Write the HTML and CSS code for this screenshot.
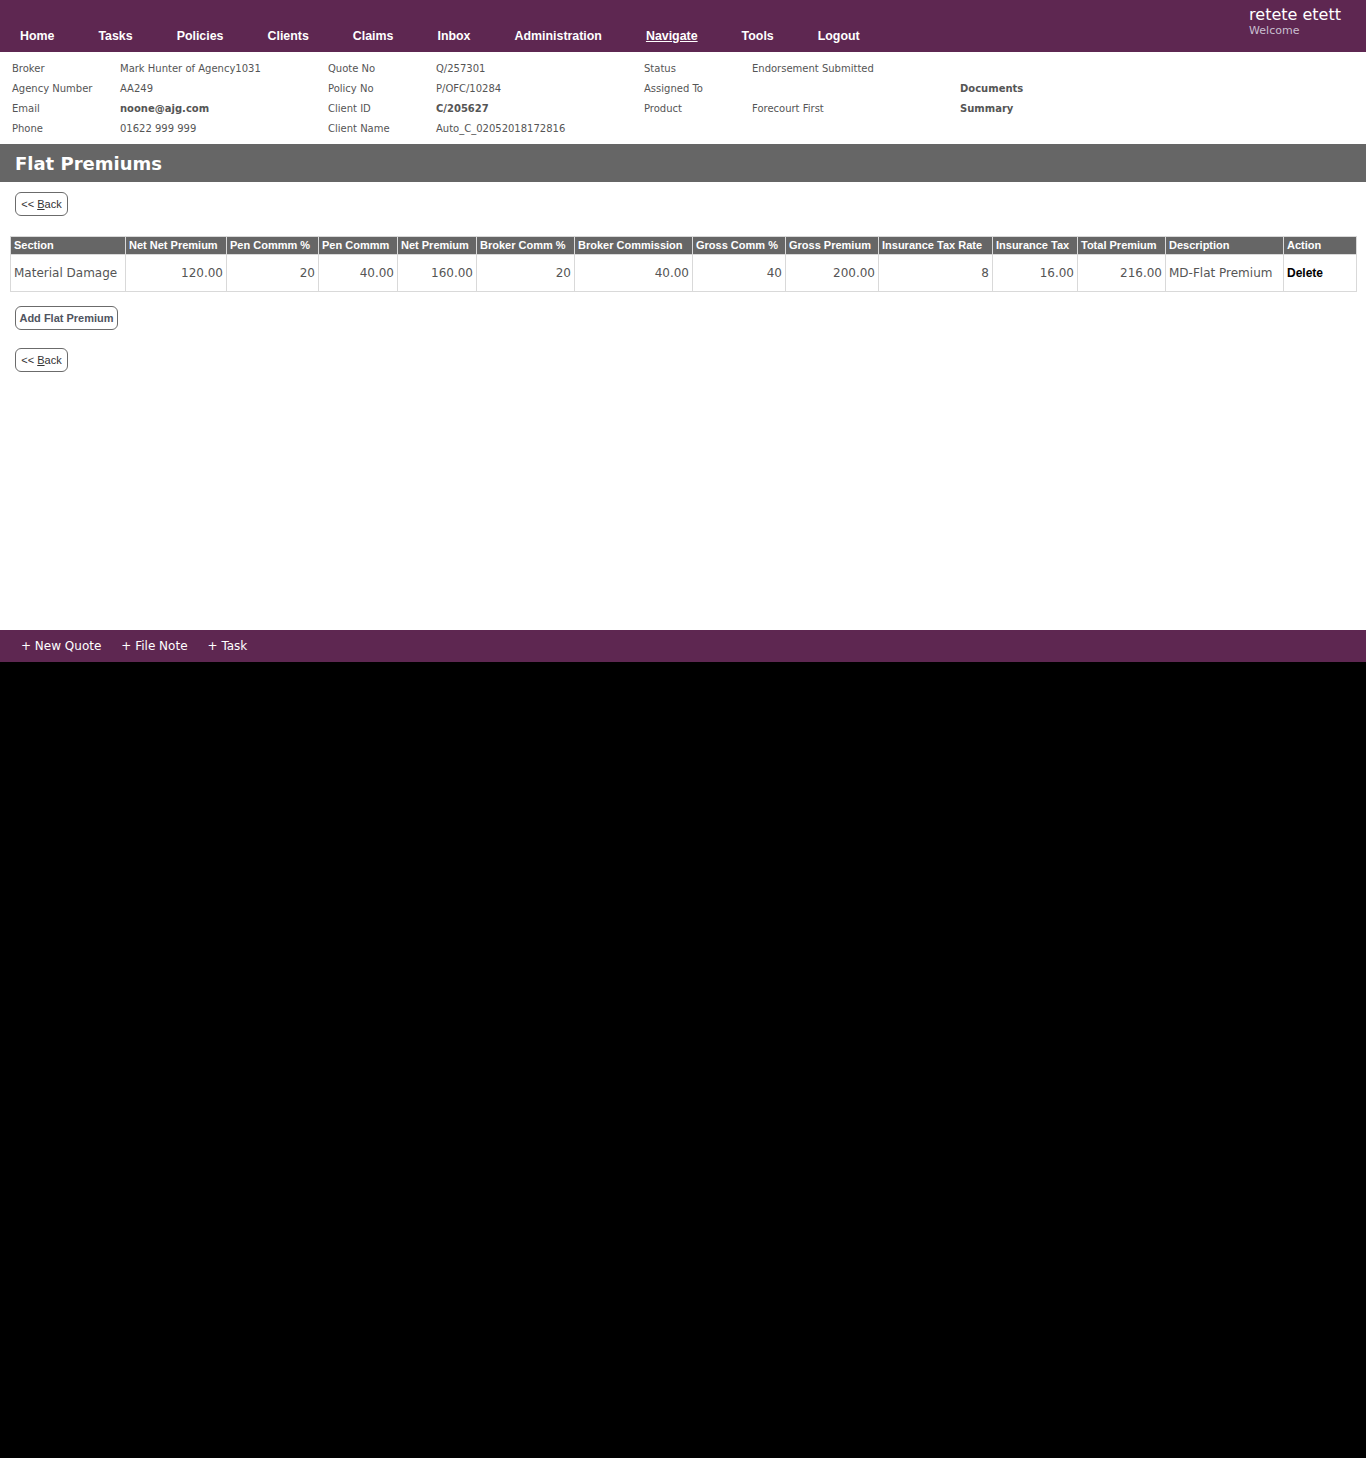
FILE: index.html
```html
<!DOCTYPE html>
<html lang="en">
<head>
<meta charset="utf-8">
<title>Flat Premiums</title>
<link rel="stylesheet" href="styles.css">
</head>
<body>
<div class="page">
  <header class="topbar">
    <nav class="nav">
      <a href="#">Home</a>
      <a href="#">Tasks</a>
      <a href="#">Policies</a>
      <a href="#">Clients</a>
      <a href="#">Claims</a>
      <a href="#">Inbox</a>
      <a href="#">Administration</a>
      <a href="#" class="active">Navigate</a>
      <a href="#">Tools</a>
      <a href="#">Logout</a>
    </nav>
    <div class="user">
      <div class="user-name">retete etett</div>
      <div class="user-welcome">Welcome</div>
    </div>
  </header>

  <section class="info">
    <div class="lbl">Broker</div><div class="val">Mark Hunter of Agency1031</div>
    <div class="lbl">Quote No</div><div class="val">Q/257301</div>
    <div class="lbl">Status</div><div class="val">Endorsement Submitted</div>
    <div class="link"></div>

    <div class="lbl">Agency Number</div><div class="val">AA249</div>
    <div class="lbl">Policy No</div><div class="val">P/OFC/10284</div>
    <div class="lbl">Assigned To</div><div class="val"></div>
    <div class="link">Documents</div>

    <div class="lbl">Email</div><div class="val strong">noone@ajg.com</div>
    <div class="lbl">Client ID</div><div class="val strong">C/205627</div>
    <div class="lbl">Product</div><div class="val">Forecourt First</div>
    <div class="link">Summary</div>

    <div class="lbl">Phone</div><div class="val">01622 999 999</div>
    <div class="lbl">Client Name</div><div class="val">Auto_C_02052018172816</div>
    <div class="lbl"></div><div class="val"></div>
    <div class="link"></div>
  </section>

  <h1 class="title-bar">Flat Premiums</h1>

  <main class="content">
    <button class="btn btn-back">&lt;&lt; <u>B</u>ack</button>

    <table class="grid">
      <colgroup>
        <col class="w1"><col class="w2"><col class="w3"><col class="w4"><col class="w5"><col class="w6"><col class="w7">
        <col class="w8"><col class="w9"><col class="w10"><col class="w11"><col class="w12"><col class="w13"><col class="w14">
      </colgroup>
      <thead>
        <tr>
          <th>Section</th>
          <th>Net Net Premium</th>
          <th>Pen Commm %</th>
          <th>Pen Commm</th>
          <th>Net Premium</th>
          <th>Broker Comm %</th>
          <th>Broker Commission</th>
          <th>Gross Comm %</th>
          <th>Gross Premium</th>
          <th>Insurance Tax Rate</th>
          <th>Insurance Tax</th>
          <th>Total Premium</th>
          <th>Description</th>
          <th>Action</th>
        </tr>
      </thead>
      <tbody>
        <tr>
          <td>Material Damage</td>
          <td class="num">120.00</td>
          <td class="num">20</td>
          <td class="num">40.00</td>
          <td class="num">160.00</td>
          <td class="num">20</td>
          <td class="num">40.00</td>
          <td class="num">40</td>
          <td class="num">200.00</td>
          <td class="num">8</td>
          <td class="num">16.00</td>
          <td class="num">216.00</td>
          <td>MD-Flat Premium</td>
          <td class="action">Delete</td>
        </tr>
      </tbody>
    </table>

    <button class="btn btn-add">Add Flat Premium</button>
    <button class="btn btn-back btn-back2">&lt;&lt; <u>B</u>ack</button>
  </main>

  <footer class="bottombar">
    <a href="#">+ New Quote</a>
    <a href="#">+ File Note</a>
    <a href="#">+ Task</a>
  </footer>
</div>
</body>
</html>
```

FILE: styles.css
```css
html {
  background: #000;
}
body {
  margin: 0;
  font-family: "DejaVu Sans", Verdana, sans-serif;
  color: #555;
}
.page {
  display: flex;
  flex-direction: column;
  min-height: 662px;
  background: #fff;
}

/* top bar */
.topbar {
  height: 52px;
  background: #5e2751;
  display: flex;
  justify-content: space-between;
}
.nav {
  display: flex;
  gap: 44px;
  padding: 28px 0 0 20px;
}
.nav a {
  color: #fff;
  text-decoration: none;
  font-family: "Liberation Sans", Arial, sans-serif;
  font-weight: bold;
  font-size: 12.4px;
  line-height: 16px;
}
.nav a.active {
  text-decoration: underline;
}
.user {
  padding: 6px 25px 0 0;
  white-space: nowrap;
}
.user-name {
  color: #fff;
  font-size: 16px;
  line-height: 18px;
}
.user-welcome {
  color: #c9bfd0;
  font-size: 11px;
  line-height: 13px;
}

/* info grid */
.info {
  display: grid;
  grid-template-columns: 108px 208px 108px 208px 108px 208px 200px;
  grid-auto-rows: 20px;
  padding: 7px 0 5px 12px;
  font-size: 10px;
  line-height: 20px;
  color: #555;
}
.info .strong {
  font-weight: bold;
}
.info .link {
  font-weight: bold;
}

/* title */
.title-bar {
  margin: 0;
  height: 38px;
  background: #666;
  color: #fff;
  font-size: 18px;
  line-height: 40px;
  padding-left: 15px;
  font-weight: bold;
}

/* content */
.content {
  flex: 1;
  display: flex;
  flex-direction: column;
  align-items: flex-start;
  padding: 10px 10px 0 10px;
}
.btn {
  font-family: "Liberation Sans", Arial, sans-serif;
  font-size: 11px;
  font-weight: bold;
  color: #4f5460;
  background: #fff;
  border: 1px solid #6b6b6b;
  border-radius: 6px;
  height: 24px;
  padding: 0 5px;
  margin-left: 5px;
  line-height: 22px;
}
.btn-back {
  width: 53px;
  font-weight: normal;
  color: #333;
  padding: 0;
}
.btn-add {
  margin-top: 14px;
  width: 103px;
  padding: 0;
}
.btn-back2 {
  margin-top: 18px;
}

.grid {
  margin-top: 20px;
  width: 1346px;
  table-layout: fixed;
  border-collapse: collapse;
}
.grid th {
  background: #666;
  color: #fff;
  font-family: "Liberation Sans", Arial, sans-serif;
  font-size: 11px;
  font-weight: bold;
  text-align: left;
  height: 17px;
  padding: 0 3px;
  border: 1px solid #d9d9d9;
  white-space: nowrap;
  overflow: hidden;
  line-height: 15px;
}
.grid td {
  border: 1px solid #d9d9d9;
  height: 36px;
  padding: 0 3px;
  font-size: 12px;
  color: #555;
  white-space: nowrap;
}
.grid td.num {
  text-align: right;
}
.grid td.action {
  color: #000;
  font-family: "Liberation Sans", Arial, sans-serif;
  font-weight: bold;
  font-size: 12px;
}
.w1 { width: 115px; }
.w2 { width: 101px; }
.w3 { width: 92px; }
.w4 { width: 79px; }
.w5 { width: 79px; }
.w6 { width: 98px; }
.w7 { width: 118px; }
.w8 { width: 93px; }
.w9 { width: 93px; }
.w10 { width: 114px; }
.w11 { width: 85px; }
.w12 { width: 88px; }
.w13 { width: 118px; }
.w14 { width: 73px; }

/* bottom bar */
.bottombar {
  height: 32px;
  background: #5e2751;
  display: flex;
  gap: 20px;
  padding-left: 21px;
  align-items: center;
}
.bottombar a {
  color: #fff;
  text-decoration: none;
  font-size: 12px;
  line-height: 32px;
}
```
